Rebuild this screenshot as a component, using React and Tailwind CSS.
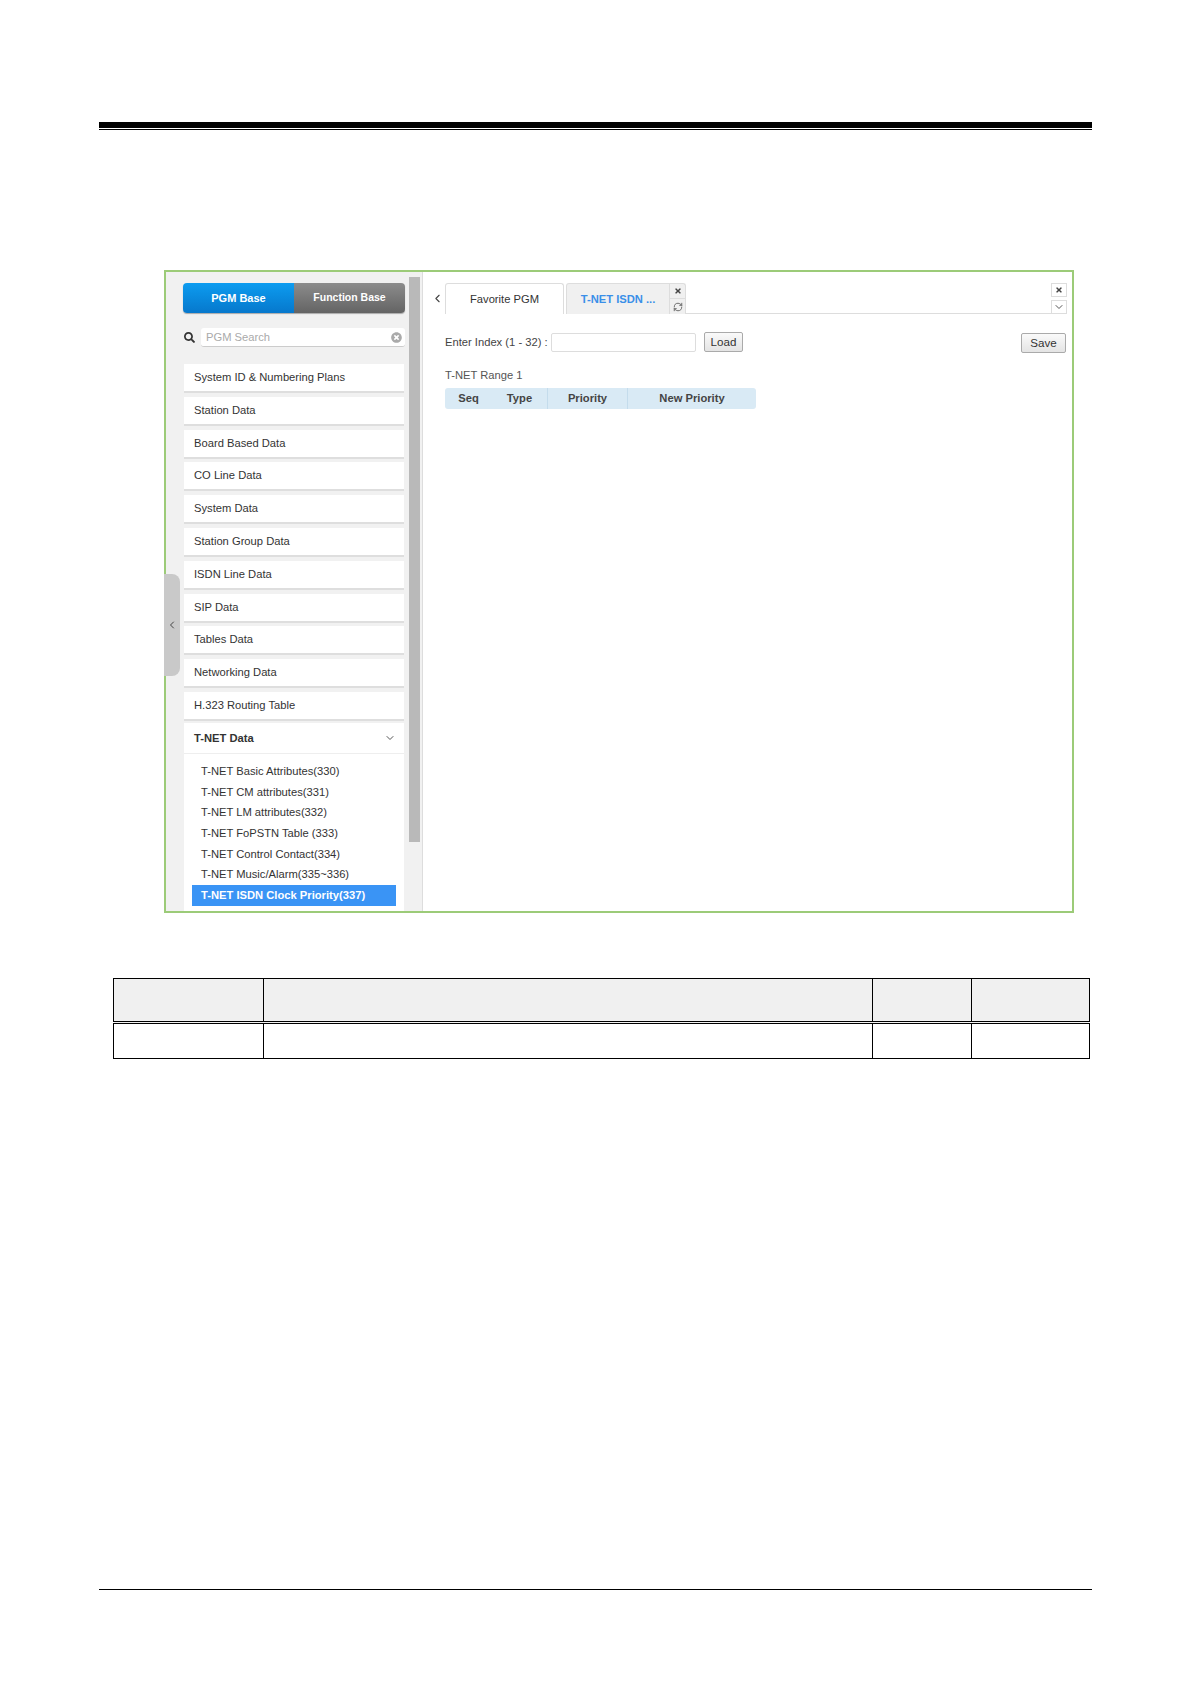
import React from "react";
import { ChevronDown, ChevronLeft, RefreshCw } from "lucide-react";
import { FaSearch, FaTimes, FaTimesCircle } from "react-icons/fa";

const MENU = [
  "System ID & Numbering Plans",
  "Station Data",
  "Board Based Data",
  "CO Line Data",
  "System Data",
  "Station Group Data",
  "ISDN Line Data",
  "SIP Data",
  "Tables Data",
  "Networking Data",
  "H.323 Routing Table",
];

const SUB_MENU = [
  "T-NET Basic Attributes(330)",
  "T-NET CM attributes(331)",
  "T-NET LM attributes(332)",
  "T-NET FoPSTN Table (333)",
  "T-NET Control Contact(334)",
  "T-NET Music/Alarm(335~336)",
];

const Sidebar = () => (
  <div className="flex w-[256px] shrink-0 overflow-hidden bg-[#f1f1f1] pl-[17px] pt-[11px]">
    <div className="w-[222px] shrink-0">
      <div className="flex h-[30px] overflow-hidden rounded-[4px] text-[11px] font-bold text-white shadow-[0_1px_1px_rgba(0,0,0,0.3)]">
        <div className="flex w-[111px] items-center justify-center bg-gradient-to-b from-[#0d9cf0] to-[#0778cc]">
          PGM Base
        </div>
        <div className="flex w-[111px] items-center justify-center bg-gradient-to-b from-[#8c8c8c] to-[#646464] text-[10.5px]">
          Function Base
        </div>
      </div>

      <div className="mt-[15px] flex items-center">
        <FaSearch className="ml-[1px] h-[11px] w-[11px] text-[#333]" />
        <div className="ml-[6px] flex h-[19px] w-[204px] items-center justify-between rounded-[3px] border-b border-[#ccc] bg-white pl-[5px] pr-[3px] text-[11.2px] text-[#aaa]">
          PGM Search
          <FaTimesCircle className="h-[11px] w-[11px] text-[#aaa]" />
        </div>
      </div>

      <div className="ml-[1px] mt-[17px] flex w-[220px] flex-col gap-[3.8px] text-[11.2px] text-[#333]">
        {MENU.map((label) => (
          <div
            key={label}
            className="flex h-[29px] items-center border-b-2 border-[#dedede] bg-white pl-[10px]"
          >
            {label}
          </div>
        ))}

        <div className="mt-[-1.8px] bg-white">
          <div className="flex h-[31px] items-center justify-between border-b border-[#eee] pl-[10px] pr-[8px] font-bold">
            T-NET Data
            <ChevronDown className="h-[12px] w-[12px] text-[#555]" />
          </div>
          <div className="flex flex-col pl-[8px] pr-[8px] pt-[7px]">
            {SUB_MENU.map((label) => (
              <div key={label} className="flex h-[20.7px] items-center pl-[9px]">
                {label}
              </div>
            ))}
            <div className="flex h-[21px] items-center bg-[#3a94f5] pl-[9px] font-bold text-white">
              T-NET ISDN Clock Priority(337)
            </div>
          </div>
          <div className="h-[20px]" />
        </div>
      </div>
    </div>

    <div className="ml-[4px] mt-[-6px] h-[565px] w-[11px] shrink-0 bg-[#b9b9b9]" />
  </div>
);

const Tabs = () => (
  <div className="flex h-[31px] items-end">
    <div className="flex w-[22px] shrink-0 items-center self-center pl-[8px]">
      <ChevronLeft className="h-[13px] w-[13px] text-[#444]" />
    </div>
    <div className="flex h-[31px] w-[119px] shrink-0 items-center justify-center rounded-t-[3px] border border-b-0 border-[#ddd] bg-white text-[11.2px] text-[#333]">
      Favorite PGM
    </div>
    <div className="ml-[2px] flex h-[31px] w-[120px] shrink-0 rounded-t-[3px] border border-b-0 border-[#ddd] bg-[#f0f0f0]">
      <div className="flex flex-1 items-center justify-center text-[11.2px] font-bold text-[#3a8fe8]">
        T-NET ISDN ...
      </div>
      <div className="flex w-[16px] flex-col border-l border-[#ddd]">
        <div className="flex h-[15px] items-center justify-center border-b border-[#ddd]">
          <FaTimes className="h-[8px] w-[8px] text-[#444]" />
        </div>
        <div className="flex flex-1 items-center justify-center">
          <RefreshCw className="h-[10px] w-[10px] text-[#555]" />
        </div>
      </div>
    </div>
    <div className="h-[1px] flex-1 bg-[#ddd]" />
    <div className="flex w-[16px] shrink-0 flex-col gap-[3px]">
      <div className="flex h-[14px] items-center justify-center border border-[#ddd] bg-white">
        <FaTimes className="h-[8px] w-[8px] text-[#444]" />
      </div>
      <div className="flex h-[14px] items-center justify-center border border-[#ddd] bg-white">
        <ChevronDown className="h-[12px] w-[12px] text-[#555]" />
      </div>
    </div>
  </div>
);

const HEAD_COLS = [
  { label: "Seq", width: "w-[47px]", border: false },
  { label: "Type", width: "w-[55px]", border: false },
  { label: "Priority", width: "w-[80px]", border: true },
  { label: "New Priority", width: "w-[129px]", border: true },
];

const Content = () => (
  <div className="flex-1 border-l border-[#ddd] pr-[5px] pt-[11px]">
    <Tabs />

    <div className="ml-[22px] mt-[18px] flex h-[20px] items-center text-[11.6px] text-[#444]">
      <span className="w-[106px] shrink-0 whitespace-nowrap text-[11.2px]">Enter Index (1 - 32) :</span>
      <div className="h-[19px] w-[145px] rounded-[2px] border border-[#ddd] bg-white" />
      <div className="ml-[8px] flex h-[20px] w-[39px] items-center justify-center rounded-[2px] border border-[#aaa] bg-gradient-to-b from-[#fafafa] to-[#e4e4e4] text-[#333]">
        Load
      </div>
      <div className="ml-auto mr-[1px] mt-[2px] flex h-[20px] w-[45px] items-center justify-center rounded-[2px] border border-[#aaa] bg-gradient-to-b from-[#fafafa] to-[#e4e4e4] text-[#333]">
        Save
      </div>
    </div>

    <div className="ml-[22px] mt-[14px] text-[11.2px] leading-[18px] text-[#555]">T-NET Range 1</div>

    <div className="ml-[22px] mt-[4px] flex h-[21px] w-[311px] overflow-hidden rounded-[3px] bg-[#d9eaf5] text-[11.2px] font-bold text-[#444]">
      {HEAD_COLS.map((col) => (
        <div
          key={col.label}
          className={`flex items-center justify-center ${col.width} ${col.border ? "border-l border-[#c4dcec]" : ""}`}
        >
          {col.label}
        </div>
      ))}
    </div>
  </div>
);

const DocTable = () => (
  <table className="ml-[113px] mt-[65px] w-[976px] table-fixed border-collapse">
    <colgroup>
      <col className="w-[150px]" />
      <col className="w-[609px]" />
      <col className="w-[99px]" />
      <col className="w-[118px]" />
    </colgroup>
    <tbody>
      <tr className="h-[44px] bg-[#f0f0f0]">
        <td className="border border-b-[3px] border-black [border-bottom-style:double]" />
        <td className="border border-b-[3px] border-black [border-bottom-style:double]" />
        <td className="border border-b-[3px] border-black [border-bottom-style:double]" />
        <td className="border border-b-[3px] border-black [border-bottom-style:double]" />
      </tr>
      <tr className="h-[36px]">
        <td className="border border-black" />
        <td className="border border-black" />
        <td className="border border-black" />
        <td className="border border-black" />
      </tr>
    </tbody>
  </table>
);

export default function App() {
  return (
    <div className="h-[1684px] w-[1191px] overflow-hidden bg-white pt-[122px] font-['Liberation_Sans',Arial,sans-serif]">
      <div className="ml-[99px] w-[993px]">
        <div className="h-[6px] bg-black" />
        <div className="mt-[1px] h-[1px] bg-black" />
      </div>

      <div className="relative ml-[164px] mt-[140px] flex h-[643px] w-[910px] border-2 border-[#9ccb78] bg-white">
        <Sidebar />
        <Content />

        {/* collapse handle sits over the frame edge */}
        <div className="absolute left-[-2px] top-[302px] flex h-[102px] w-[16px] items-center justify-center rounded-r-[8px] bg-[#c9c9c9]">
          <ChevronLeft className="h-[12px] w-[12px] text-[#444]" />
        </div>
      </div>

      <DocTable />

      <div className="ml-[99px] mt-[530px] h-[1px] w-[993px] bg-black" />
    </div>
  );
}
